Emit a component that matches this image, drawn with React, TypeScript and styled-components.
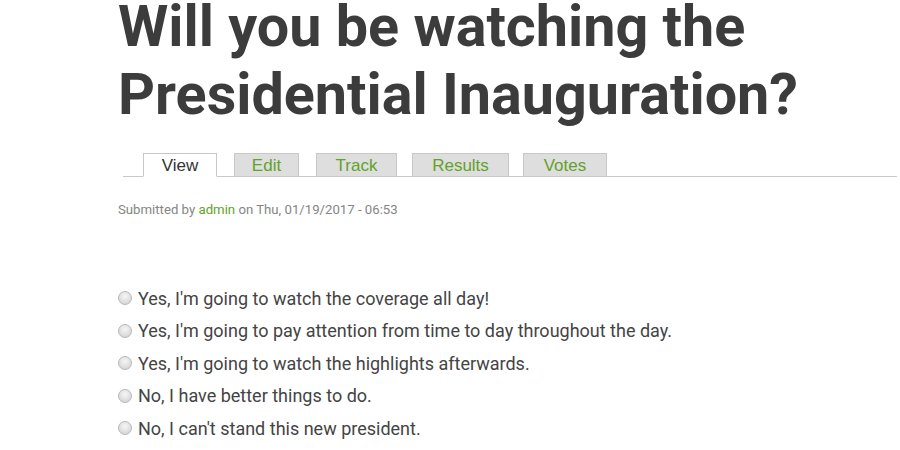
import { FC } from "react"
import styled, { createGlobalStyle } from "styled-components"

const GlobalStyle = createGlobalStyle`
  body {
    margin: 0;
    background: #fff;
    font-family: Roboto, "Liberation Sans", sans-serif;
  }
`

const Page = styled.div`
  padding: 0 3px 0 118px;
  overflow: hidden;
  height: 450px;
`

const Title = styled.h1`
  margin: -7px 0 0;
  font-family: Roboto, sans-serif;
  font-weight: 700;
  font-size: 57.5px;
  line-height: 68px;
  color: #3c3c3c;
`

const TabBar = styled.ul`
  display: flex;
  list-style: none;
  margin: 24px 0 0 5px;
  padding: 0 0 0 20px;
  border-bottom: 1px solid #c8c8c8;
`

const Tab = styled.li<{ active?: boolean; width: number; gap: number }>`
  box-sizing: border-box;
  width: ${(p) => p.width}px;
  margin-right: ${(p) => p.gap}px;
  height: 24px;
  margin-bottom: -1px;
  border: 1px solid #c8c8c8;
  border-bottom-color: ${(p) => (p.active ? "#fff" : "#c8c8c8")};
  background: ${(p) => (p.active ? "#fff" : "#dedede")};
  color: ${(p) => (p.active ? "#333" : "#62a229")};
  font-family: "Liberation Sans", Arial, sans-serif;
  font-size: 17px;
  line-height: 23px;
  text-align: center;
`

const Submitted = styled.div`
  margin-top: 25px;
  font-size: 13.2px;
  color: #858585;

  a {
    color: #62a229;
    text-decoration: none;
  }
`

const Options = styled.div`
  margin-top: 70px;
  display: flex;
  flex-direction: column;
  gap: 10.5px;
`

const Option = styled.label`
  display: flex;
  align-items: center;
  gap: 6px;
  height: 22px;
  font-size: 18px;
  color: #444;
`

const Radio = styled.span`
  box-sizing: border-box;
  flex: none;
  width: 14px;
  height: 14px;
  border-radius: 50%;
  border: 1px solid #b8b8b8;
  background: radial-gradient(circle at 50% 35%, #f6f6f6 0%, #dadada 70%, #cacaca 100%);
`

const tabs = [
  { label: "View", width: 74, gap: 17, active: true },
  { label: "Edit", width: 65, gap: 17 },
  { label: "Track", width: 81, gap: 15 },
  { label: "Results", width: 97, gap: 14 },
  { label: "Votes", width: 84, gap: 0 },
]

const choices = [
  "Yes, I'm going to watch the coverage all day!",
  "Yes, I'm going to pay attention from time to day throughout the day.",
  "Yes, I'm going to watch the highlights afterwards.",
  "No, I have better things to do.",
  "No, I can't stand this new president.",
]

const App: FC = () => {
  return (
    <>
      <GlobalStyle />
      <Page>
        <Title>
          Will you be watching the
          <br />
          Presidential Inauguration?
        </Title>
        <TabBar>
          {tabs.map((t) => (
            <Tab key={t.label} active={t.active} width={t.width} gap={t.gap}>
              {t.label}
            </Tab>
          ))}
        </TabBar>
        <Submitted>
          Submitted by <a href="#">admin</a> on Thu, 01/19/2017 - 06:53
        </Submitted>
        <Options>
          {choices.map((c) => (
            <Option key={c}>
              <Radio />
              {c}
            </Option>
          ))}
        </Options>
      </Page>
    </>
  )
}

export default App
